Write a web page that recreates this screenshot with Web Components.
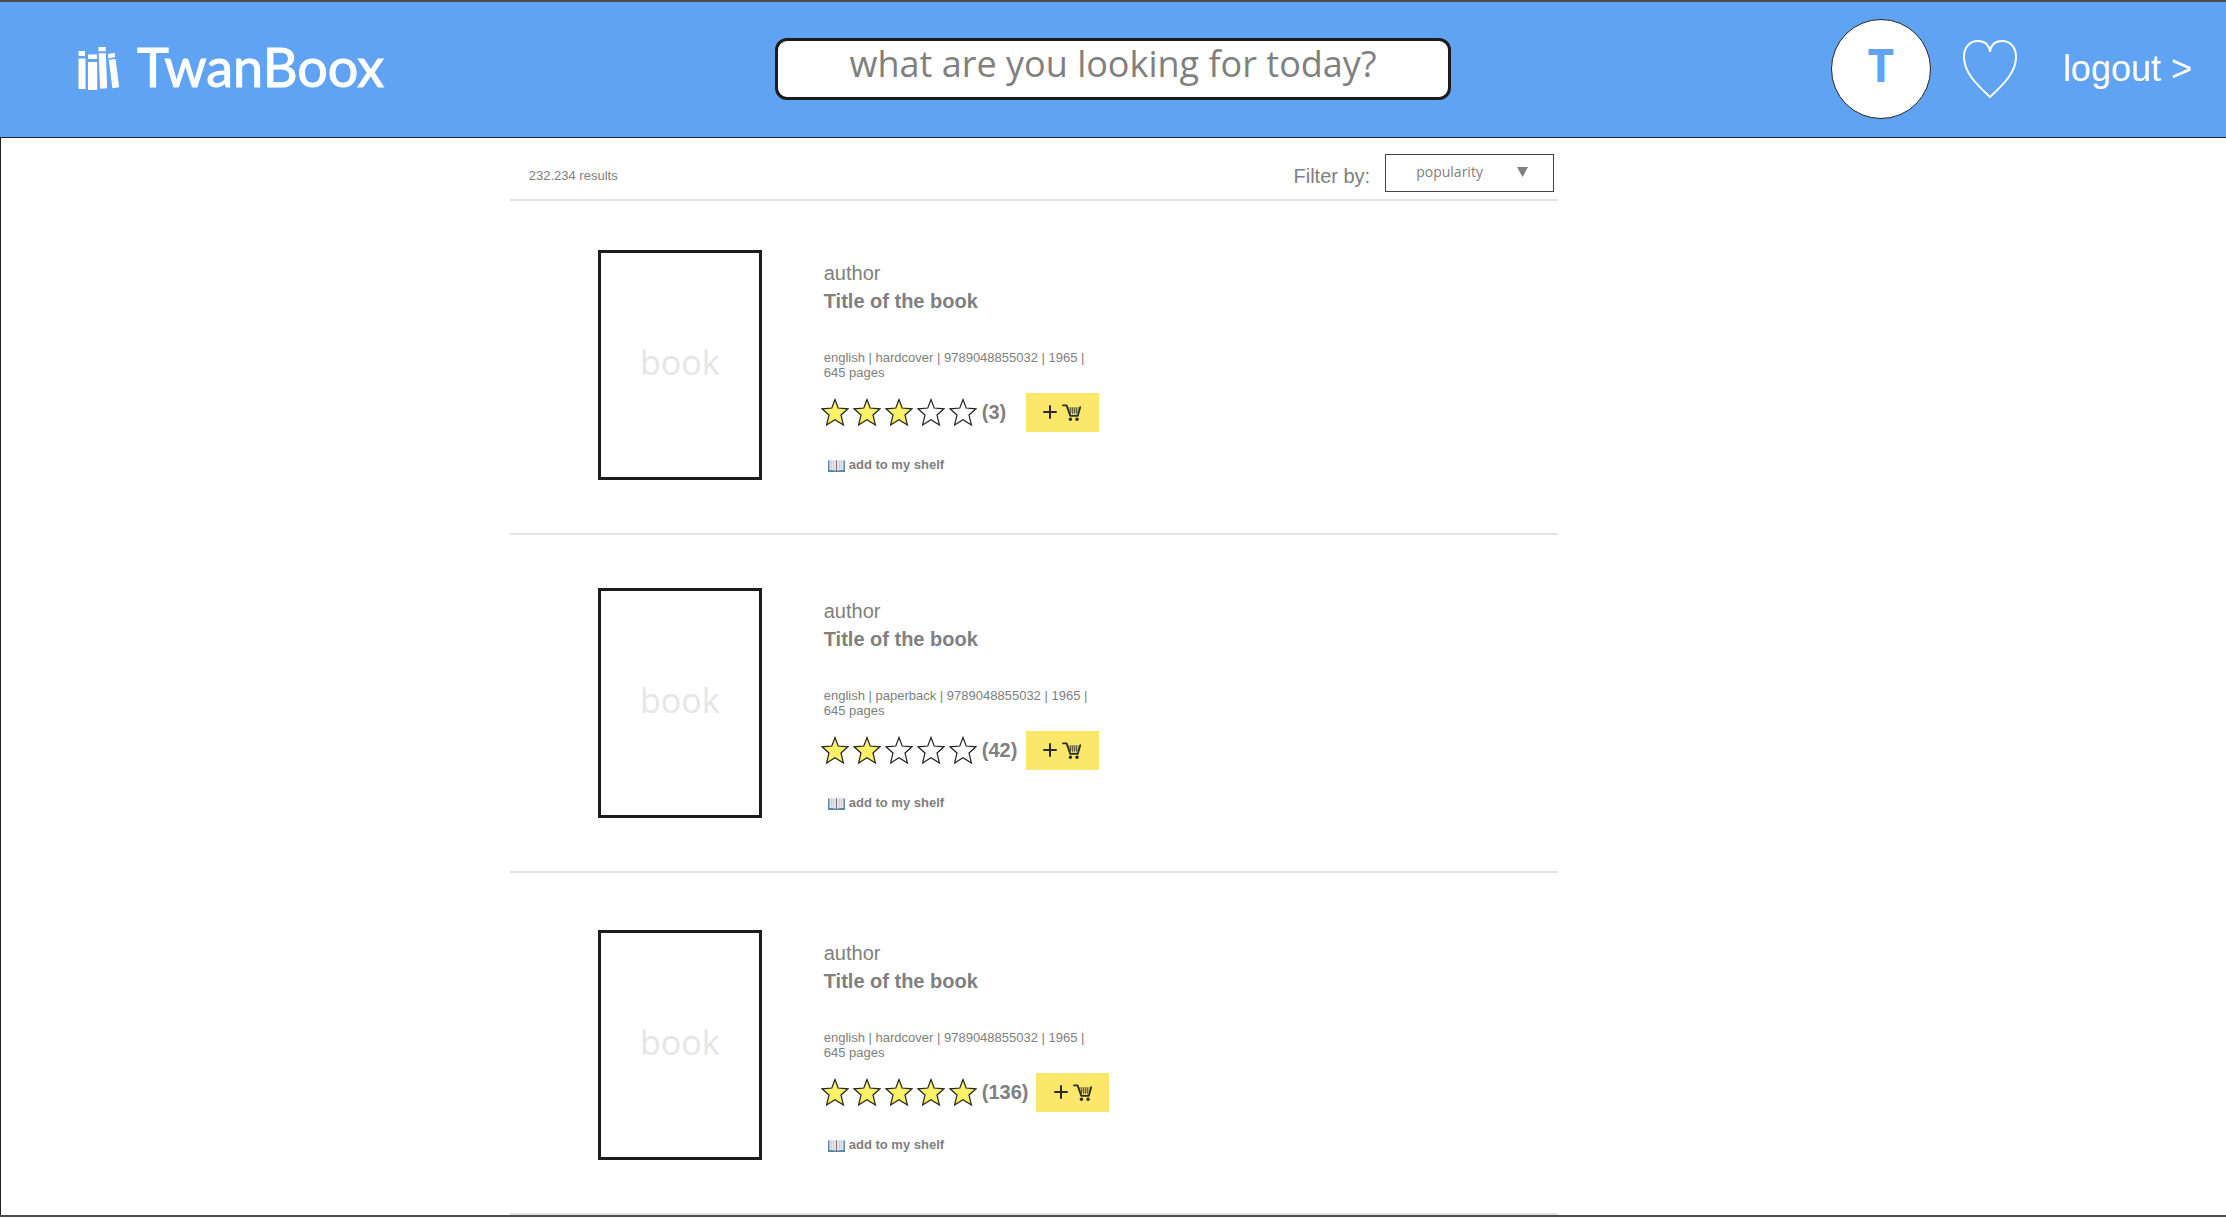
<!DOCTYPE html>
<html lang="en">
<head>
<meta charset="utf-8">
<title>TwanBoox</title>
<style>
  html, body { margin: 0; height: 100%; }
  body { font-family: "Liberation Sans", Arial, sans-serif; color: #808080; background: #fff; overflow: hidden; }
</style>
</head>
<body>
<boox-page>
  <boox-header slot="header" initial="T"></boox-header>
  <boox-toolbar count="232.234"></boox-toolbar>
  <boox-item space="small" format="hardcover" rating="3" reviews="3"></boox-item>
  <boox-item space="medium" format="paperback" rating="2" reviews="42"></boox-item>
  <boox-item space="large" format="hardcover" rating="5" reviews="136"></boox-item>
</boox-page>

<script>
const define = (name, render) => customElements.define(name, class extends HTMLElement {
  constructor() {
    super();
    this.attachShadow({ mode: "open" });
  }
  connectedCallback() {
    this.shadowRoot.innerHTML = render(this);
  }
});

define("boox-page", () => `
  <style>
    :host { display: block; box-sizing: border-box; height: calc(100vh - 1px); border: solid #4a4a4a; border-width: 2px 0 2px 0; box-shadow: inset 1px 0 #222; overflow: hidden; }
    main { width: 47.1%; margin-left: 22.9%; }
  </style>
  <slot name="header"></slot>
  <main><slot></slot></main>`);

define("boox-logo", () => `
  <style>
    :host { display: block; }
    a { display: flex; align-items: center; gap: 17px; color: #fff; text-decoration: none; }
    span { padding-bottom: 4px; font: 400 54px/60px Lato, sans-serif; -webkit-text-stroke: 1px #fff; }
    svg { display: block; }
  </style>
  <a href="#">
    <svg width="42" height="44" viewBox="78 47 42 44" fill="#fff" aria-hidden="true">
      <path d="M78.5 51h6.5v5h-6.500zM78.500 58.500h7v30.500h-7zM88 54.500h9v4.500h-9zM88 62h9.200v28h-9.200zM98.500 47h7.200v4.200h-7.200zM98.700 53.200h7.200l1.200 35-7 .5zM108 54l6.600-1.200.6 4.200-6.800 1.400zM108.800 59.800l6.800-.8 3.600 28.200-6.800 1z"/>
    </svg>
    <span>TwanBoox</span>
  </a>`);

define("boox-header", el => `
  <style>
    :host { display: block; }
    header { display: grid; grid-template-columns: 1fr 676px 1fr; align-items: center; height: 134px; padding: 0 34px 1px; background: #5fa3f2; border-bottom: 1px solid #222; }
    boox-logo { padding-left: 44px; }
    input { box-sizing: border-box; width: 100%; height: 62px; margin: 0; padding: 0 0 12px; border: 3px solid #1c1c1c; border-radius: 12px; background: #fff; font: 36px/46px "Open Sans", sans-serif; text-align: center; outline: 0; }
    input::placeholder { color: #808080; opacity: 1; }
    nav { display: flex; justify-content: flex-end; align-items: center; }
    .avatar { box-sizing: border-box; display: flex; justify-content: center; width: 100px; height: 100px; border: 1px solid #222; border-radius: 50%; background: #fff; color: #5fa3f2; font: 700 46px/88px "Open Sans", sans-serif; text-decoration: none; }
    .heart { margin: 0 45px 0 31px; padding: 0; border: 0; background: none; }
    svg { display: block; }
    .out { color: #fff; font-size: 36px; line-height: 40px; text-decoration: none; white-space: nowrap; }
  </style>
  <header>
    <boox-logo></boox-logo>
    <input type="text" aria-label="Search books" placeholder="what are you looking for today?">
    <nav>
      <a class="avatar" href="#">${el.getAttribute("initial")}</a>
      <button class="heart" aria-label="Favourites">
        <svg width="56" height="60" viewBox="0 0 56 60" fill="none" stroke="#fff" stroke-width="2">
          <path d="M28 13C27 5 22 2 16 2 7 2 2 9 2 18 2 33 14 45 28 58 42 45 54 33 54 18 54 9 49 2 40 2 34 2 29 5 28 13Z"/>
        </svg>
      </button>
      <a class="out" href="#">logout &gt;</a>
    </nav>
  </header>`);

define("boox-toolbar", el => `
  <style>
    :host { display: flex; align-items: center; justify-content: space-between; height: 61px; padding: 0 4px 0 19px; border-bottom: 2px solid #e3e3e3; }
    p { margin: 0; padding-top: 14px; font-size: 13px; line-height: 20px; }
    div { display: flex; align-items: center; gap: 15px; padding-top: 9px; }
    label { padding-top: 6px; font-size: 20px; line-height: 24px; }
    .box { display: grid; align-items: center; width: 169px; height: 38px; padding: 0; }
    .box > * { grid-area: 1 / 1; }
    select { box-sizing: border-box; width: 100%; height: 100%; margin: 0; padding: 0 32px 2px 30px; appearance: none; border: 1px solid #444; border-radius: 0; background: #fff; color: #808080; font: 14px/20px "Open Sans", sans-serif; }
    svg { justify-self: end; margin: 0 26px 2px 0; pointer-events: none; }
  </style>
  <p>${el.getAttribute("count")} results</p>
  <div>
    <label for="sort">Filter by:</label>
    <span class="box">
      <select id="sort"><option>popularity</option></select>
      <svg width="11" height="10" viewBox="0 0 11 10" fill="#808080"><path d="M0 0h11L5.500 10z"/></svg>
    </span>
  </div>`);

define("boox-stars", el => {
  const n = +el.getAttribute("value");
  const star = i => `<svg width="28" height="28" viewBox="0 0 28 28" fill="${i < n ? "#fcf267" : "#fff"}" stroke="#222" stroke-width="1.200"><path d="M14 1.500 17.200 10 27 10.800 20 17 22.400 27 14 21.800 5.600 27 8 17 1 10.800 10.800 10Z"/></svg>`;
  return `
  <style>
    :host { display: flex; gap: 4px; }
    svg { display: block; }
  </style>${[0, 1, 2, 3, 4].map(star).join("")}`;
});

define("boox-cart-button", () => `
  <style>
    :host { display: block; }
    button { display: flex; align-items: center; justify-content: center; gap: 5px; width: 73px; height: 39px; margin: 0; padding: 0; border: 0; background: #fbe86b; }
    svg { display: block; }
  </style>
  <button aria-label="Add to cart">
    <svg width="14" height="14" viewBox="0 0 14 14" stroke="#2b2b2b" stroke-width="2" stroke-linecap="round"><path d="M7 1v12M1 7h12"/></svg>
    <svg width="19" height="17" viewBox="0 0 19 17" fill="none" stroke="#2b2b2b" stroke-width="1.800" stroke-linecap="round" stroke-linejoin="round">
      <path d="M1 1.400h3.600L8.200 11.800h7.600L18.200 3.200"/>
      <path d="M6 4h11M6.600 6h10M7.200 8h9M8.500 4v6M10.500 4v6M12.500 4v6M14.500 4v6" stroke-width=".6"/>
      <circle cx="8.400" cy="15.200" r=".9" fill="#2b2b2b"/><circle cx="15" cy="15.200" r=".9" fill="#2b2b2b"/>
    </svg>
  </button>`);

define("boox-item", el => `
  <style>
    :host { display: block; border-bottom: 2px solid #e3e3e3; }
    article { display: flex; gap: 59px; padding: 53px 0 53px 88px; }
    :host([space="small"]) article { padding-top: 49px; }
    :host([space="large"]) article { padding-top: 57px; }
    .cover { box-sizing: border-box; display: flex; align-items: center; justify-content: center; width: 164px; height: 230px; padding-bottom: 6px; border: 3px solid #1c1c1c; color: #e6e6e6; font: 34px/46px "Open Sans", sans-serif; }
    .info { display: flex; flex-direction: column; width: 290px; }
    p, h2 { margin: 0 0 0 3px; }
    .author { padding-top: 9px; font-size: 20px; line-height: 28px; }
    h2 { font-size: 20px; line-height: 28px; }
    .meta { max-width: 280px; padding: 35px 0 12px; font-size: 13px; line-height: 15px; }
    .buy { display: flex; align-items: center; height: 40px; }
    .count { min-width: 36px; margin: 0 8px 0 5px; font-size: 20px; font-weight: 700; line-height: 24px; }
    .shelf { display: flex; align-items: center; align-self: flex-start; gap: 4px; margin: 23px 0 0 7px; padding: 0; border: 0; background: none; color: #808080; font: 700 13px/20px "Liberation Sans", Arial, sans-serif; }
    svg { display: block; }
  </style>
  <article>
    <div class="cover">book</div>
    <div class="info">
      <p class="author">author</p>
      <h2>Title of the book</h2>
      <p class="meta">english | ${el.getAttribute("format")} | 9789048855032 | 1965 | 645&nbsp;pages</p>
      <div class="buy">
        <boox-stars value="${el.getAttribute("rating")}"></boox-stars>
        <span class="count">(${el.getAttribute("reviews")})</span>
        <boox-cart-button></boox-cart-button>
      </div>
      <button class="shelf">
        <svg width="17" height="13" viewBox="0 0 17 13">
          <path d="M0 1.500h17V13H0z" fill="#5d87a8"/>
          <path d="M1.500.5Q6 0 8.500 1.500 11 0 15.500.5V11Q11 10.500 8.500 12 6 10.500 1.500 11z" fill="#e4e4ea"/>
          <path d="M3.500 2v8M5.500 2v8M11.500 2v8M13.500 2v8" stroke="#c4c4cc" stroke-width=".7"/>
          <path d="M8.500 1.500V12.500" stroke="#555" stroke-width=".8"/>
        </svg>
        add to my shelf
      </button>
    </div>
  </article>`);
</script>
</body>
</html>
